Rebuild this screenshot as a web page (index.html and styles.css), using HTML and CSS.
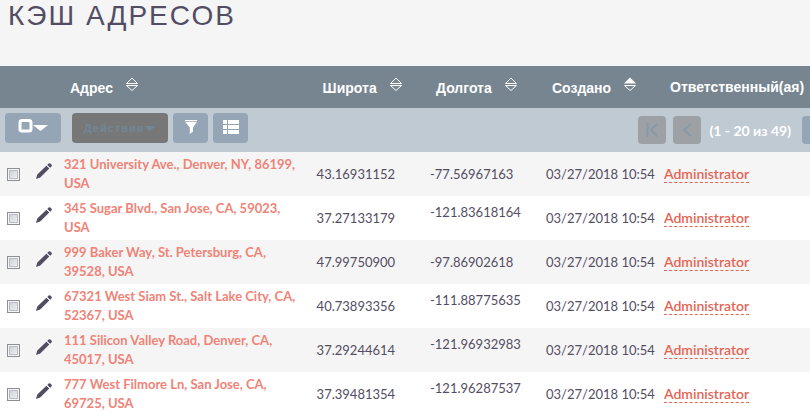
FILE: index.html
```html
<!DOCTYPE html>
<html lang="ru">
<head>
    <meta charset="UTF-8">
    <meta name="viewport" content="width=device-width, initial-scale=1.0">
    <title>Кэш адресов</title>
    <link rel="stylesheet" href="styles.css">
</head>
<body>
    <svg class="sprite" aria-hidden="true">
        <symbol id="sort" viewBox="0 0 14 14">
            <path d="M1.5 6.5 7 1l5.5 5.5zM1.5 8.5h11L7 13.5z" fill="none" stroke="currentColor"/>
        </symbol>
        <symbol id="sort-up" viewBox="0 0 14 14">
            <path d="M1 6.5 7 .5l6 6z" fill="currentColor"/>
            <path d="M1.5 8.5h11L7 13.5z" fill="none" stroke="currentColor"/>
        </symbol>
        <symbol id="pencil" viewBox="0 0 16 16">
            <path d="M0 16 1.3 11.6 10.4 2.7 13.3 5.6 4.2 14.6zM11.3 1.9 12.6.6Q13.6-.3 14.7.7L15.4 1.4Q16.4 2.5 15.4 3.5L14.2 4.7z" fill="currentColor"/>
        </symbol>
    </svg>

    <h1 class="module-title">КЭШ АДРЕСОВ</h1>

    <table class="list-view">
        <colgroup>
            <col class="col-check">
            <col class="col-edit">
            <col class="col-address">
            <col class="col-lat">
            <col class="col-lng">
            <col class="col-created">
            <col class="col-user">
        </colgroup>
        <thead>
            <tr class="titles">
                <th></th>
                <th></th>
                <th><a href="#">Адрес<svg class="sort-icon"><use href="#sort"/></svg></a></th>
                <th><a href="#">Широта<svg class="sort-icon"><use href="#sort"/></svg></a></th>
                <th><a href="#">Долгота<svg class="sort-icon"><use href="#sort"/></svg></a></th>
                <th><a href="#">Создано<svg class="sort-icon"><use href="#sort-up"/></svg></a></th>
                <th>Ответственный(ая)</th>
            </tr>
            <tr class="toolbar-row">
                <td colspan="7">
                    <div class="toolbar">
                        <button type="button" class="btn btn-select" aria-label="Выбрать">
                            <svg width="30" height="14" viewBox="0 0 30 14"><rect x="2" y="1.5" width="11" height="10.5" rx="2" fill="none" stroke="currentColor" stroke-width="3"/><path d="M15 6h15l-7.5 6z" fill="currentColor"/></svg>
                        </button>
                        <button type="button" class="btn btn-actions" disabled>Действия<svg width="12" height="5" viewBox="0 0 12 5"><path d="M0 0h12L6 5z" fill="currentColor"/></svg></button>
                        <button type="button" class="btn btn-icon" aria-label="Фильтр">
                            <svg width="14" height="14" viewBox="0 0 14 14"><path d="M1 0h12v1.2H1zM1.2 2h11.6L9 7.4v4L5.8 14V7.4z" fill="currentColor"/></svg>
                        </button>
                        <button type="button" class="btn btn-icon" aria-label="Колонки">
                            <svg width="16" height="14" viewBox="0 0 16 14"><path d="M0 0h4v4H0zM5 0h11v4H5zM0 5h4v4H0zM5 5h11v4H5zM0 10h4v4H0zM5 10h11v4H5z" fill="currentColor"/></svg>
                        </button>
                        <div class="pager">
                            <button type="button" class="btn btn-page" aria-label="В начало" disabled>
                                <svg width="12" height="14" viewBox="0 0 12 14"><path d="M1.5 0v14M11 1 5 7l6 6" fill="none" stroke="currentColor" stroke-width="2"/></svg>
                            </button>
                            <button type="button" class="btn btn-page" aria-label="Назад" disabled>
                                <svg width="12" height="14" viewBox="0 0 12 14"><path d="M10 1 3 7l7 6" fill="none" stroke="currentColor" stroke-width="2"/></svg>
                            </button>
                            <span class="page-numbers">(1 - 20 из 49)</span>
                            <button type="button" class="btn btn-page" aria-label="Вперёд"></button>
                        </div>
                    </div>
                </td>
            </tr>
        </thead>
        <tbody>
            <tr>
                <td><input type="checkbox" class="check" aria-label="Выбрать запись"></td>
                <td><a class="edit" href="#" aria-label="Править"><svg width="16" height="16"><use href="#pencil"/></svg></a></td>
                <td><a class="address" href="#">321 University Ave., Denver, NY, 86199, USA</a></td>
                <td>43.16931152</td>
                <td>-77.56967163</td>
                <td>03/27/2018 10:54</td>
                <td><a class="user" href="#">Administrator</a></td>
            </tr>
            <tr>
                <td><input type="checkbox" class="check" aria-label="Выбрать запись"></td>
                <td><a class="edit" href="#" aria-label="Править"><svg width="16" height="16"><use href="#pencil"/></svg></a></td>
                <td><a class="address" href="#">345 Sugar Blvd., San Jose, CA, 59023, USA</a></td>
                <td>37.27133179</td>
                <td class="long-value">-121.83618164</td>
                <td>03/27/2018 10:54</td>
                <td><a class="user" href="#">Administrator</a></td>
            </tr>
            <tr>
                <td><input type="checkbox" class="check" aria-label="Выбрать запись"></td>
                <td><a class="edit" href="#" aria-label="Править"><svg width="16" height="16"><use href="#pencil"/></svg></a></td>
                <td><a class="address" href="#">999 Baker Way, St. Petersburg, CA, 39528, USA</a></td>
                <td>47.99750900</td>
                <td>-97.86902618</td>
                <td>03/27/2018 10:54</td>
                <td><a class="user" href="#">Administrator</a></td>
            </tr>
            <tr>
                <td><input type="checkbox" class="check" aria-label="Выбрать запись"></td>
                <td><a class="edit" href="#" aria-label="Править"><svg width="16" height="16"><use href="#pencil"/></svg></a></td>
                <td><a class="address" href="#">67321 West Siam St., Salt Lake City, CA, 52367, USA</a></td>
                <td>40.73893356</td>
                <td class="long-value">-111.88775635</td>
                <td>03/27/2018 10:54</td>
                <td><a class="user" href="#">Administrator</a></td>
            </tr>
            <tr>
                <td><input type="checkbox" class="check" aria-label="Выбрать запись"></td>
                <td><a class="edit" href="#" aria-label="Править"><svg width="16" height="16"><use href="#pencil"/></svg></a></td>
                <td><a class="address" href="#">111 Silicon Valley Road, Denver, CA, 45017, USA</a></td>
                <td>37.29244614</td>
                <td class="long-value">-121.96932983</td>
                <td>03/27/2018 10:54</td>
                <td><a class="user" href="#">Administrator</a></td>
            </tr>
            <tr>
                <td><input type="checkbox" class="check" aria-label="Выбрать запись"></td>
                <td><a class="edit" href="#" aria-label="Править"><svg width="16" height="16"><use href="#pencil"/></svg></a></td>
                <td><a class="address" href="#">777 West Filmore Ln, San Jose, CA, 69725, USA</a></td>
                <td>37.39481354</td>
                <td class="long-value">-121.96287537</td>
                <td>03/27/2018 10:54</td>
                <td><a class="user" href="#">Administrator</a></td>
            </tr>
        </tbody>
    </table>
</body>
</html>
```

FILE: styles.css
```css
* {
    box-sizing: border-box;
}

body {
    margin: 0;
    background: #f5f5f5;
    color: #534d64;
    font-family: Lato, "Liberation Sans", sans-serif;
    font-size: 13px;
    line-height: 19px;
    overflow: hidden;
}

a {
    color: inherit;
    text-decoration: none;
}

.sprite {
    display: none;
}

.module-title {
    margin: 0;
    padding: 0 8px 34px;
    font-family: "Liberation Sans", sans-serif;
    font-size: 28px;
    font-weight: normal;
    line-height: 32px;
    letter-spacing: 2px;
}

.list-view {
    width: 100%;
    table-layout: fixed;
    border-collapse: collapse;
}

.col-check {
    width: 30px;
}

.col-edit {
    width: 29px;
}

.col-lat {
    width: 14%;
}

.col-lng {
    width: 116px;
}

.col-created {
    width: 118px;
}

.col-user {
    width: 151px;
}

.titles {
    background: #778591;
    color: #fff;
}

.titles th {
    height: 42px;
    padding: 0 0 0 11px;
    font-family: "Liberation Sans", sans-serif;
    font-size: 14px;
    font-weight: bold;
    text-align: left;
    white-space: nowrap;
}

.sort-icon {
    width: 14px;
    height: 14px;
    margin-left: 12px;
    vertical-align: 2px;
}

.toolbar-row {
    background: #bfcad3;
}

.toolbar-row td {
    padding: 5px 0 8px 5px;
}

.toolbar {
    display: flex;
    gap: 5px;
}

.btn {
    display: flex;
    align-items: center;
    justify-content: center;
    flex-shrink: 0;
    height: 30px;
    padding: 0;
    border: none;
    border-radius: 4px;
    background: #95a5b6;
    color: #fff;
    cursor: pointer;
}

.btn:disabled {
    cursor: default;
}

.btn-select {
    width: 56px;
    margin-right: 6px;
    padding-bottom: 4px;
}

.btn-actions {
    width: 96px;
    background: #777;
    font-family: "Liberation Sans", sans-serif;
    font-size: 11px;
    font-weight: bold;
    letter-spacing: 1px;
}

.btn-actions:disabled {
    color: #718798;
}

.btn-icon {
    width: 35px;
    padding-bottom: 2px;
}

.pager {
    display: flex;
    align-items: center;
    gap: 7px;
    margin-left: auto;
    margin-right: -20px;
    padding-top: 3px;
}

.btn-page {
    width: 28px;
    height: 28px;
}

.btn-page:disabled {
    background: #9da1a5;
    color: #8699a8;
}

.page-numbers {
    padding: 0 4px 0 1px;
    color: #fff;
    font-size: 14px;
    font-weight: bold;
    white-space: nowrap;
}

tbody tr {
    background: #fff;
}

tbody tr:nth-child(odd) {
    background: #f5f5f5;
}

tbody td {
    height: 44px;
    padding: 3px 0 3px 5px;
    vertical-align: middle;
}

tbody .long-value {
    padding-bottom: 15px;
}

.check {
    appearance: none;
    display: block;
    width: 13px;
    height: 13px;
    margin: 0 2px;
    border: 1px solid #8e8f8f;
    background: linear-gradient(135deg, #c6cbd1, #f6f6f6);
    box-shadow: inset 0 0 0 1px #f4f4f4, inset 0 0 0 2px #b9bec4;
}

.edit {
    display: block;
    padding: 0 0 6px 1px;
    line-height: 0;
}

.address {
    display: block;
    padding-right: 10px;
    color: #f08377;
    font-weight: bold;
}

.user {
    border-bottom: 1px dashed #e56455;
    color: #e56455;
    font-size: 14px;
    font-weight: 600;
}
```
